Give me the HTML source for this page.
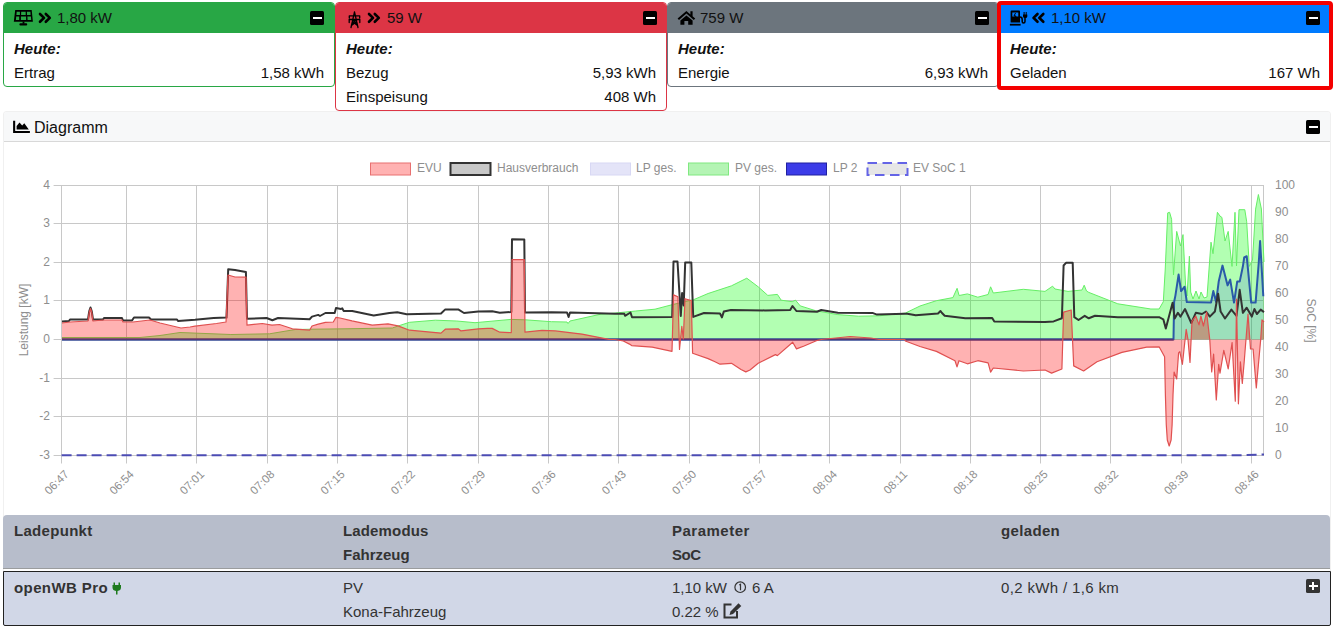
<!DOCTYPE html>
<html><head><meta charset="utf-8">
<style>
*{box-sizing:border-box;margin:0;padding:0}
html,body{width:1335px;height:628px;overflow:hidden;background:#fff;font-family:"Liberation Sans",sans-serif;color:#111;font-size:15px}
.abs{position:absolute}
.card{position:absolute;border:1px solid;border-radius:4px;background:#fff;overflow:hidden}
.hdr{position:absolute;left:0;right:0;top:0;height:30px}
.t{position:absolute;white-space:nowrap;line-height:24px;font-size:15px}
.r{text-align:right}
.bi{font-weight:bold;font-style:italic}
.btn{position:absolute;width:14px;height:14px;background:#000;border-radius:1.5px}
.btn:after{content:"";position:absolute;left:2.5px;top:5.8px;width:9px;height:2.4px;background:#fff}
.plus:before{content:"";position:absolute;left:6px;top:3px;width:2px;height:8px;background:#fff}
.tk{font-family:"Liberation Sans",sans-serif;font-size:12px;fill:#8e8e8e}
</style></head><body>

<!-- card 1 -->
<div class="card" style="left:3px;top:2px;width:332px;height:85px;border-color:#28a745">
  <div class="hdr" style="background:#28a745"></div>
</div>
<div class="t" style="left:57px;top:6px">1,80 kW</div>
<div class="btn" style="left:310px;top:11px"></div>
<div class="t bi" style="left:14px;top:37px">Heute:</div>
<div class="t" style="left:14px;top:61px">Ertrag</div>
<div class="t r" style="left:200px;width:124px;top:61px">1,58 kWh</div>

<!-- card 2 -->
<div class="card" style="left:335px;top:2px;width:332px;height:109px;border-color:#dc3545">
  <div class="hdr" style="background:#dc3545"></div>
</div>
<div class="t" style="left:387px;top:6px">59 W</div>
<div class="btn" style="left:643px;top:11px"></div>
<div class="t bi" style="left:346px;top:37px">Heute:</div>
<div class="t" style="left:346px;top:61px">Bezug</div>
<div class="t r" style="left:532px;width:124px;top:61px">5,93 kWh</div>
<div class="t" style="left:346px;top:85px">Einspeisung</div>
<div class="t r" style="left:532px;width:124px;top:85px">408 Wh</div>

<!-- card 3 -->
<div class="card" style="left:667px;top:2px;width:332px;height:85px;border-color:#6c757d">
  <div class="hdr" style="background:#6c757d"></div>
</div>
<div class="t" style="left:700px;top:6px">759 W</div>
<div class="btn" style="left:975px;top:11px"></div>
<div class="t bi" style="left:678px;top:37px">Heute:</div>
<div class="t" style="left:678px;top:61px">Energie</div>
<div class="t r" style="left:864px;width:124px;top:61px">6,93 kWh</div>

<!-- card 4 -->
<div class="abs" style="left:997px;top:1px;width:336px;height:89px;border:4px solid #f40000;border-radius:4px"></div>
<div class="abs" style="left:1001px;top:5px;width:328px;height:28px;background:#007bff"></div>
<div class="t" style="left:1051px;top:6px">1,10 kW</div>
<div class="btn" style="left:1306px;top:11px"></div>
<div class="t bi" style="left:1010px;top:37px">Heute:</div>
<div class="t" style="left:1010px;top:61px">Geladen</div>
<div class="t r" style="left:1196px;width:124px;top:61px">167 Wh</div>

<!-- diagram card -->
<div class="card" style="left:3px;top:111px;width:1328px;height:500px;border-color:rgba(0,0,0,.06)">
  <div class="hdr" style="background:#f7f8f9;height:30px;border-bottom:1px solid #d8d8d8"></div>
</div>
<div class="t" style="left:34px;top:116px;font-size:16px">Diagramm</div>
<div class="btn" style="left:1306px;top:120px"></div>

<svg class="abs" style="left:0;top:0" width="1335" height="628" viewBox="0 0 1335 628">
<path d="M61.5,185.5 V463.5 M126.5,185.5 V463.5 M196.5,185.5 V463.5 M267.5,185.5 V463.5 M337.5,185.5 V463.5 M407.5,185.5 V463.5 M478.5,185.5 V463.5 M548.5,185.5 V463.5 M618.5,185.5 V463.5 M689.5,185.5 V463.5 M759.5,185.5 V463.5 M829.5,185.5 V463.5 M900.5,185.5 V463.5 M970.5,185.5 V463.5 M1040.5,185.5 V463.5 M1110.5,185.5 V463.5 M1181.5,185.5 V463.5 M1251.5,185.5 V463.5 M53.6,455.5 H1264 M53.6,416.5 H1264 M53.6,378.5 H1264 M53.6,339.5 H1264 M53.6,300.5 H1264 M53.6,262.5 H1264 M53.6,223.5 H1264 M53.6,185.5 H1264 M1263.5,185.5 V455.5" stroke="#c8c8c8" stroke-width="1" fill="none"/>
<text x="50" y="458.8" text-anchor="end" class="tk">-3</text>
<text x="50" y="420.2" text-anchor="end" class="tk">-2</text>
<text x="50" y="381.6" text-anchor="end" class="tk">-1</text>
<text x="50" y="343" text-anchor="end" class="tk">0</text>
<text x="50" y="304.4" text-anchor="end" class="tk">1</text>
<text x="50" y="265.8" text-anchor="end" class="tk">2</text>
<text x="50" y="227.2" text-anchor="end" class="tk">3</text>
<text x="50" y="188.6" text-anchor="end" class="tk">4</text>
<text x="1275" y="458.8" class="tk">0</text>
<text x="1275" y="431.8" class="tk">10</text>
<text x="1275" y="404.8" class="tk">20</text>
<text x="1275" y="377.7" class="tk">30</text>
<text x="1275" y="350.7" class="tk">40</text>
<text x="1275" y="323.7" class="tk">50</text>
<text x="1275" y="296.7" class="tk">60</text>
<text x="1275" y="269.7" class="tk">70</text>
<text x="1275" y="242.6" class="tk">80</text>
<text x="1275" y="215.6" class="tk">90</text>
<text x="1275" y="188.6" class="tk">100</text>
<text transform="translate(69.6,475) rotate(-45)" text-anchor="end" class="tk" style="font-size:11.5px">06:47</text>
<text transform="translate(134.6,475) rotate(-45)" text-anchor="end" class="tk" style="font-size:11.5px">06:54</text>
<text transform="translate(204.9,475) rotate(-45)" text-anchor="end" class="tk" style="font-size:11.5px">07:01</text>
<text transform="translate(275.2,475) rotate(-45)" text-anchor="end" class="tk" style="font-size:11.5px">07:08</text>
<text transform="translate(345.5,475) rotate(-45)" text-anchor="end" class="tk" style="font-size:11.5px">07:15</text>
<text transform="translate(415.8,475) rotate(-45)" text-anchor="end" class="tk" style="font-size:11.5px">07:22</text>
<text transform="translate(486.1,475) rotate(-45)" text-anchor="end" class="tk" style="font-size:11.5px">07:29</text>
<text transform="translate(556.5,475) rotate(-45)" text-anchor="end" class="tk" style="font-size:11.5px">07:36</text>
<text transform="translate(626.8,475) rotate(-45)" text-anchor="end" class="tk" style="font-size:11.5px">07:43</text>
<text transform="translate(697.1,475) rotate(-45)" text-anchor="end" class="tk" style="font-size:11.5px">07:50</text>
<text transform="translate(767.4,475) rotate(-45)" text-anchor="end" class="tk" style="font-size:11.5px">07:57</text>
<text transform="translate(837.7,475) rotate(-45)" text-anchor="end" class="tk" style="font-size:11.5px">08:04</text>
<text transform="translate(908,475) rotate(-45)" text-anchor="end" class="tk" style="font-size:11.5px">08:11</text>
<text transform="translate(978.3,475) rotate(-45)" text-anchor="end" class="tk" style="font-size:11.5px">08:18</text>
<text transform="translate(1048.6,475) rotate(-45)" text-anchor="end" class="tk" style="font-size:11.5px">08:25</text>
<text transform="translate(1118.9,475) rotate(-45)" text-anchor="end" class="tk" style="font-size:11.5px">08:32</text>
<text transform="translate(1189.2,475) rotate(-45)" text-anchor="end" class="tk" style="font-size:11.5px">08:39</text>
<text transform="translate(1259.6,475) rotate(-45)" text-anchor="end" class="tk" style="font-size:11.5px">08:46</text>
<text transform="translate(28,320) rotate(-90)" text-anchor="middle" class="tk">Leistung [kW]</text>
<text transform="translate(1306.5,320.5) rotate(90)" text-anchor="middle" class="tk">SoC [%]</text>
<path d="M61.6,455.3 H1240 L1264,454.5" stroke="#4c4cb4" stroke-width="2" stroke-dasharray="10,5" fill="none"/>
<path d="M62,339.5 L62,337.5 140,337.5 160,335.5 180,332.5 195,333.1 230.8,334.5 269.5,333.8 295.3,329.5 312,329.2 345,328.8 392.3,328 398,326 409.5,322.3 435.3,320.2 456.8,321 475,322.7 511,319.4 525,319.8 551.4,321.7 567,322 568,323.6 570,321 601.1,314.1 615,313.1 635.7,311 655,309.2 672.9,304.5 693.6,299.7 708.1,293.5 720,289.6 731.5,285.8 746.8,278.2 758.2,286.8 767.8,295.4 777.4,294.4 781.2,300.2 792.2,301.7 795.5,300.2 800.3,305.9 815.6,310.7 837.8,314.6 858.5,316.2 879.1,315.8 905.3,313.1 920,306 936.4,300.7 952.9,297.6 957.1,288.3 959.1,295.5 967.4,293.9 977.8,297.2 988.1,294.5 990.6,286.8 993.3,293 1023.3,289.3 1045,291.4 1052.6,286.2 1055,289 1068,291.4 1082,290 1084.2,285.2 1086.5,291 1088.8,292.4 1117.8,303.8 1150.9,309 1159.1,309 1163.3,301.7 1165.2,270 1167.7,212.9 1169.6,212.3 1171.6,219.3 1173.5,275 1176.7,231.4 1180.5,246 1183,234.6 1185.6,285 1187,296 1189.4,256.2 1190.7,292 1193,299 1196,291 1199,299 1201,292 1204,298 1207,297 1211,242.2 1213,253.7 1217.4,212.3 1220,216.1 1221.9,217.4 1225,241 1228.2,231.4 1232,266.4 1235,212.3 1236.5,266 1239,209.7 1244.8,209.7 1246.7,221.8 1249.3,266.4 1252.5,260 1255.6,209.1 1258.4,194.5 1261.4,209 1264,262 L1264,339.5Z" fill="rgba(0,255,0,0.3)" stroke="none"/>
<polyline points="62,337.5 140,337.5 160,335.5 180,332.5 195,333.1 230.8,334.5 269.5,333.8 295.3,329.5 312,329.2 345,328.8 392.3,328 398,326 409.5,322.3 435.3,320.2 456.8,321 475,322.7 511,319.4 525,319.8 551.4,321.7 567,322 568,323.6 570,321 601.1,314.1 615,313.1 635.7,311 655,309.2 672.9,304.5 693.6,299.7 708.1,293.5 720,289.6 731.5,285.8 746.8,278.2 758.2,286.8 767.8,295.4 777.4,294.4 781.2,300.2 792.2,301.7 795.5,300.2 800.3,305.9 815.6,310.7 837.8,314.6 858.5,316.2 879.1,315.8 905.3,313.1 920,306 936.4,300.7 952.9,297.6 957.1,288.3 959.1,295.5 967.4,293.9 977.8,297.2 988.1,294.5 990.6,286.8 993.3,293 1023.3,289.3 1045,291.4 1052.6,286.2 1055,289 1068,291.4 1082,290 1084.2,285.2 1086.5,291 1088.8,292.4 1117.8,303.8 1150.9,309 1159.1,309 1163.3,301.7 1165.2,270 1167.7,212.9 1169.6,212.3 1171.6,219.3 1173.5,275 1176.7,231.4 1180.5,246 1183,234.6 1185.6,285 1187,296 1189.4,256.2 1190.7,292 1193,299 1196,291 1199,299 1201,292 1204,298 1207,297 1211,242.2 1213,253.7 1217.4,212.3 1220,216.1 1221.9,217.4 1225,241 1228.2,231.4 1232,266.4 1235,212.3 1236.5,266 1239,209.7 1244.8,209.7 1246.7,221.8 1249.3,266.4 1252.5,260 1255.6,209.1 1258.4,194.5 1261.4,209 1264,262" fill="none" stroke="#66ee66" stroke-width="1" stroke-linejoin="round"/>
<path d="M62,339.5 L62,339.5 1173.5,339.5 1174.1,302 1175.4,295.6 1178.6,274.6 1181.1,291.1 1184.6,286.7 1186.8,302 1211,302.6 1213.3,291.1 1216.1,302 1218.7,281.6 1222.5,265.6 1227.6,285.4 1230.2,279.6 1234,302.6 1237.2,281.6 1239.7,281.6 1242.9,266.3 1244.2,257.5 1246.7,256.2 1251.2,302.6 1255.6,302.6 1258.8,262 1260.1,241 1263.3,296.2 L1263.3,339.5Z" fill="rgba(0,0,255,0.12)" stroke="none"/>
<polyline points="62,339.5 1173.5,339.5 1174.1,302 1175.4,295.6 1178.6,274.6 1181.1,291.1 1184.6,286.7 1186.8,302 1211,302.6 1213.3,291.1 1216.1,302 1218.7,281.6 1222.5,265.6 1227.6,285.4 1230.2,279.6 1234,302.6 1237.2,281.6 1239.7,281.6 1242.9,266.3 1244.2,257.5 1246.7,256.2 1251.2,302.6 1255.6,302.6 1258.8,262 1260.1,241 1263.3,296.2" fill="none" stroke="#2a5aa8" stroke-width="2" stroke-linejoin="round"/>
<path d="M62,339.5 H1173.5" stroke="#38408a" stroke-width="2" fill="none"/>
<polyline points="62,321.5 69,321 70,319.5 88,319.5 89.3,311 90.5,307.5 91.7,311 93,319.5 103,319.5 104,318 122,318 123,320.5 132,320.5 134,317.5 149,317.5 151,319.5 177,319.5 178,321 195,319.8 213.6,318 226.5,317.6 228.2,269.3 235,270 245.9,271.9 247,318.8 266.6,318 272.4,320.2 278,318 309.6,319.2 312,316.6 318.2,314.9 320,316 325.4,313 334.7,313 336,308 341,309 342.2,308.3 343.6,310.9 352.2,311 373.7,315.5 389.4,313 397.3,312.3 406.6,314.2 441,313.5 445.3,309.4 458.2,309.4 464,313 478.3,311.6 492.2,311.2 499.8,312.7 511.3,312 512,239.2 524.3,239.5 525,312.6 551.4,312.2 567,312.5 568.6,317 570,312.5 615,313.7 624.3,313.7 625,315.8 630.5,312.5 632,317.2 672.2,316.9 673.5,261.5 677.5,261.5 680.8,316 682.1,293 683.7,305.4 685.2,262.4 691.3,262.4 693.2,316.9 704,313 720,313.5 721.9,317.4 723.8,311.6 730.9,310 765,310.4 790.2,310 792.5,306 796.4,311 817,311.7 821.2,310 837.8,312.7 873,313.1 877,314.6 905,313.7 907.4,313.7 915.7,315.2 938,313.5 940.5,311 942,313 944.7,315.8 965.3,318.3 992.2,317.9 994.3,321.4 1045,322 1053.6,321.4 1061.9,318.3 1063.6,265.5 1066,262.8 1072.7,262.8 1074.3,317.2 1078.5,320 1084.7,315.8 1088.8,318.3 1095,315.8 1117.8,317.2 1159.1,317.2 1163.3,319.3 1165.8,328.6 1168.5,318.3 1172.6,302.8 1174.7,318.5 1177.9,312.8 1180.5,316.6 1185,309 1191.3,323 1195.8,312.8 1202.1,314 1206,311.5 1209.8,316.6 1214.9,311.5 1218.1,293.7 1220.6,311.5 1225,318.5 1231.4,309.6 1236.5,316 1239.7,289.8 1242.9,312.8 1246.7,307.7 1251.8,316.6 1254.4,309 1256.9,314 1260.7,309.6 1264,312.1" fill="none" stroke="#333" stroke-width="2" stroke-linejoin="round"/>
<path d="M62,339.5 L62,323 70,322 88,321 89.3,312 90.5,308.5 91.7,312 93,321 103,320 122,320 123,322 133,322 150,320 160,323 181,328 190,327 195,326.2 216.5,323.5 226,322 228,275 235,277 246,277.2 247,325.2 262.3,323.5 272,325.2 279.5,324.5 292.4,328.8 309.6,330.2 312,326 318.2,324.2 325.4,322.3 333.3,322 336,317.3 340,318 352,320.9 372.2,325.2 388,323.8 398,325.9 409.5,330.2 441,333.1 445.3,329.2 458.2,328.8 461,330.9 478.3,328.8 487.4,328.4 492.2,328.4 499.8,332.2 511.3,332.6 512,259.6 524.3,259.5 525,332.2 541.9,330.3 555.3,330.9 582,334.1 608.8,339.3 615,339.5 623.3,341 629.5,344.1 631.6,345.6 652.2,347.2 672,351.3 673.5,294.9 677.9,296.8 679.5,349.4 681.8,326.4 683.3,338.9 685,298.7 691.3,300.6 692.6,353.2 708.1,358.6 715,361.8 720,364.2 731.5,363.3 741,369.5 745.8,371.9 750,370 758.2,363.3 775.4,354.6 777.4,355.6 792.7,342.2 796.5,348.9 804.1,346 817.5,340.3 821.2,339.5 850.2,336.5 870.9,338 879.1,339.5 905,339.5 905.3,341 920,346.5 936.4,351.4 955,360.7 957,366.9 959,360.7 967.4,363.8 977.8,360.7 988.1,362.8 990.6,372.1 993.3,368 1023.3,371 1045,370 1051.6,373.1 1061.9,369 1063.6,312.1 1071.2,310 1073.7,365.9 1083.6,371 1097,361.7 1121.9,352.4 1146.7,347.2 1159.1,346.8 1164.6,356.7 1165.4,395 1166.3,425 1167.3,440 1169.2,446 1171.1,440 1172.1,425 1173,395 1174.1,372 1176.7,379 1178.6,352.8 1179.8,351.6 1182.4,364.3 1186.2,329.3 1188,339.5 1190,362.4 1192,321 1195.8,316 1199,324.9 1200.9,316 1203.4,326 1206.6,312.1 1209.8,340 1211.7,372 1213.6,354.1 1216.3,400 1218.7,364.3 1220,373.2 1223.8,350.3 1228.2,368.8 1232.1,342.6 1235.3,401.2 1236.5,299 1238.4,403.8 1240.4,361.8 1242.3,383.4 1244.2,361.8 1248,314 1250.5,349 1253.1,349 1256.3,387.9 1260.7,339.5 1262,319.8 1264,322 L1264,339.5Z" fill="rgba(255,0,0,0.3)" stroke="none"/>
<polyline points="62,323 70,322 88,321 89.3,312 90.5,308.5 91.7,312 93,321 103,320 122,320 123,322 133,322 150,320 160,323 181,328 190,327 195,326.2 216.5,323.5 226,322 228,275 235,277 246,277.2 247,325.2 262.3,323.5 272,325.2 279.5,324.5 292.4,328.8 309.6,330.2 312,326 318.2,324.2 325.4,322.3 333.3,322 336,317.3 340,318 352,320.9 372.2,325.2 388,323.8 398,325.9 409.5,330.2 441,333.1 445.3,329.2 458.2,328.8 461,330.9 478.3,328.8 487.4,328.4 492.2,328.4 499.8,332.2 511.3,332.6 512,259.6 524.3,259.5 525,332.2 541.9,330.3 555.3,330.9 582,334.1 608.8,339.3 615,339.5 623.3,341 629.5,344.1 631.6,345.6 652.2,347.2 672,351.3 673.5,294.9 677.9,296.8 679.5,349.4 681.8,326.4 683.3,338.9 685,298.7 691.3,300.6 692.6,353.2 708.1,358.6 715,361.8 720,364.2 731.5,363.3 741,369.5 745.8,371.9 750,370 758.2,363.3 775.4,354.6 777.4,355.6 792.7,342.2 796.5,348.9 804.1,346 817.5,340.3 821.2,339.5 850.2,336.5 870.9,338 879.1,339.5 905,339.5 905.3,341 920,346.5 936.4,351.4 955,360.7 957,366.9 959,360.7 967.4,363.8 977.8,360.7 988.1,362.8 990.6,372.1 993.3,368 1023.3,371 1045,370 1051.6,373.1 1061.9,369 1063.6,312.1 1071.2,310 1073.7,365.9 1083.6,371 1097,361.7 1121.9,352.4 1146.7,347.2 1159.1,346.8 1164.6,356.7 1165.4,395 1166.3,425 1167.3,440 1169.2,446 1171.1,440 1172.1,425 1173,395 1174.1,372 1176.7,379 1178.6,352.8 1179.8,351.6 1182.4,364.3 1186.2,329.3 1188,339.5 1190,362.4 1192,321 1195.8,316 1199,324.9 1200.9,316 1203.4,326 1206.6,312.1 1209.8,340 1211.7,372 1213.6,354.1 1216.3,400 1218.7,364.3 1220,373.2 1223.8,350.3 1228.2,368.8 1232.1,342.6 1235.3,401.2 1236.5,299 1238.4,403.8 1240.4,361.8 1242.3,383.4 1244.2,361.8 1248,314 1250.5,349 1253.1,349 1256.3,387.9 1260.7,339.5 1262,319.8 1264,322" fill="none" stroke="#e05050" stroke-width="1.2" stroke-linejoin="round"/>
<rect x="370.5" y="163" width="40" height="12" fill="rgba(255,0,0,0.3)" stroke="#e87070" stroke-width="1"/>
<text x="417" y="172" class="tk">EVU</text>
<rect x="450.5" y="163" width="40" height="12" fill="#c8c8c8" stroke="#333" stroke-width="2"/>
<text x="497" y="172" class="tk">Hausverbrauch</text>
<rect x="590.5" y="163" width="40" height="12" fill="#e4e4f8" stroke="#d8d8f4" stroke-width="1"/>
<text x="636" y="172" class="tk">LP ges.</text>
<rect x="688.5" y="163" width="40" height="12" fill="#b4f4b4" stroke="#80e880" stroke-width="1"/>
<text x="735" y="172" class="tk">PV ges.</text>
<rect x="786.5" y="163" width="40" height="12" fill="#3c3ce8" stroke="#2020a0" stroke-width="1"/>
<text x="833" y="172" class="tk">LP 2</text>
<rect x="867.5" y="163" width="40" height="12" fill="#e6e6e6" stroke="#6464e6" stroke-width="2" stroke-dasharray="9.5,5.5"/>
<text x="913" y="172" class="tk">EV SoC 1</text>
</svg>


<!-- table -->
<div class="abs" style="left:3px;top:515px;width:1327px;height:54px;background:#b7bdcb;border-radius:4px 4px 0 0;border-bottom:1px solid #9a9c9e"></div>
<div class="abs" style="left:3px;top:571px;width:1328px;height:55px;background:#d1d7e7;border:1px solid #222;border-radius:0 0 2px 2px"></div>
<div class="t" style="left:14px;top:519px;font-weight:bold;color:#333;letter-spacing:0.3px">Ladepunkt</div>
<div class="t" style="left:343px;top:519px;font-weight:bold;color:#333;letter-spacing:0.15px">Lademodus</div>
<div class="t" style="left:343px;top:543px;font-weight:bold;color:#333">Fahrzeug</div>
<div class="t" style="left:672px;top:519px;font-weight:bold;color:#333;letter-spacing:0.5px">Parameter</div>
<div class="t" style="left:672px;top:543px;font-weight:bold;color:#333;letter-spacing:-0.5px">SoC</div>
<div class="t" style="left:1001px;top:519px;font-weight:bold;color:#333;letter-spacing:0.35px">geladen</div>
<div class="t" style="left:14px;top:576px;font-weight:bold;color:#333;letter-spacing:0.4px">openWB Pro</div>
<div class="t" style="left:343px;top:576px;color:#333">PV</div>
<div class="t" style="left:343px;top:600px;color:#333">Kona-Fahrzeug</div>
<div class="t" style="left:672px;top:576px;color:#333">1,10 kW</div>
<div class="t" style="left:752px;top:576px;color:#333">6 A</div>
<div class="t" style="left:672px;top:600px;color:#333">0.22 %</div>
<div class="t" style="left:1001px;top:576px;color:#333;letter-spacing:0.35px">0,2 kWh / 1,6 km</div>
<div class="btn plus" style="left:1306px;top:579px;background:#333"></div>

<!--ICONS-->
<svg class="abs" style="left:0;top:0" width="1335" height="628">
<!-- solar panel -->
<path fill="#000" fill-rule="evenodd" d="M15.2,10 H31.7 L32.9,21.8 H13.8 Z M16.7,11.7 H19.9 V14.9 H16.4 Z M21.2,11.7 H25.7 V14.9 H21.1 Z M26.9,11.7 H30.4 L30.6,14.9 H27 Z M16.2,16.4 H19.2 V20 H15.9 Z M20.9,16.4 H26.1 V20 H20.9 Z M27.4,16.4 H30.9 L31.2,20 H27.6 Z"/>
<rect x="22.6" y="21.5" width="1.8" height="2.2" fill="#000"/>
<rect x="19.4" y="23.3" width="7.8" height="2.3" rx="1" fill="#000"/>
<path d="M40,14 L44,17.9 L40,21.8 M45.8,14 L49.8,17.9 L45.8,21.8" stroke="#000" stroke-width="2.6" fill="none" stroke-linecap="round" stroke-linejoin="round"/>
<!-- tower -->
<g stroke="#000" stroke-width="1.3" fill="none" stroke-linecap="round">
<path d="M354.5,11.8 L351,27.5 M354.5,11.8 L358,27.5 M350,15.8 H359 M349.5,19.5 H359.5 M352.3,21.5 L357.5,25.5 M356.7,21.5 L351.5,25.5 M352.8,19.5 L356.2,23 M356.2,19.5 L352.8,23"/>
<path d="M349.3,15.8 V18 M359.7,15.8 V18 M349.2,19.5 V22.5 M359.8,19.5 V22.5"/>
</g>
<path d="M369,14 L373,17.9 L369,21.8 M374.8,14 L378.8,17.9 L374.8,21.8" stroke="#000" stroke-width="2.6" fill="none" stroke-linecap="round" stroke-linejoin="round"/>
<!-- house -->
<path fill="#000" d="M686.4,11 L677.6,18.6 L679,20 L686.4,13.6 L693.8,20 L695.2,18.6 L692.6,16.3 V11.3 H690.4 V14.4 Z M686.4,15.5 L680.4,20.6 V24.7 H684.4 V21.1 H688.2 V24.7 H692.6 V20.6 Z"/>
<!-- charging station -->
<path fill="#000" fill-rule="evenodd" d="M11.5,10.4 H19 Q20,10.4 20,11.4 V22.6 H10.6 V11.4 Q10.6,10.4 11.5,10.4 Z M12.3,12.5 V16.5 H18.3 V12.5 Z" transform="translate(1000,0)"/>
<path fill="#000" d="M1009.9,23.8 H1020.6 V25.6 H1009.9 Z"/>
<path d="M1020,17 Q1022.2,17 1022.2,19.5 V21.5 Q1022.2,23 1023.5,23 Q1025,23 1025,21.5 V16" stroke="#000" stroke-width="1.5" fill="none"/>
<path fill="#000" d="M1023,14.5 H1027.3 V16.5 Q1027.3,18 1025.2,18 Q1023,18 1023,16.5 Z M1023.6,12 H1024.6 V14.5 H1023.6 Z M1025.7,12 H1026.7 V14.5 H1025.7 Z"/>
<path d="M1015.5,13 L1014,16 H1016 L1014.5,19.5" stroke="#000" stroke-width="1" fill="none"/>
<path d="M1037.5,14 L1033.5,17.9 L1037.5,21.8 M1043.3,14 L1039.3,17.9 L1043.3,21.8" stroke="#000" stroke-width="2.6" fill="none" stroke-linecap="round" stroke-linejoin="round"/>
<!-- chart area icon -->
<path fill="#000" d="M13.1,120.7 H15.2 V131 H29.9 V133.1 H13.1 Z M16.6,129.6 V126 L19.5,122.5 L22.2,125.5 L24.3,123.3 L28.8,129.6 Z"/>
<!-- plug (table) -->
<path fill="#1e7a1e" d="M113.5,582.5 H115 V585 H113.5 Z M118.5,582.5 H120 V585 H118.5 Z M112.5,585 H121 V587.5 Q121,590.5 117.5,591 V594.5 H116 V591 Q112.5,590.5 112.5,587.5 Z"/>
<!-- info circle -->
<circle cx="740.2" cy="587.2" r="5.3" stroke="#333" stroke-width="1.2" fill="none"/>
<path d="M739.3,585 L740.5,584.3 V590.3" stroke="#333" stroke-width="1.2" fill="none"/>
<!-- edit -->
<path d="M731.5,604.5 H724.5 V617.5 H737 V611" stroke="#333" stroke-width="2" fill="none"/>
<path fill="#333" d="M738.5,603.3 L741.3,606 L733,614 L729.5,615 L730.5,611.5 Z"/>
</svg>
</body></html>
